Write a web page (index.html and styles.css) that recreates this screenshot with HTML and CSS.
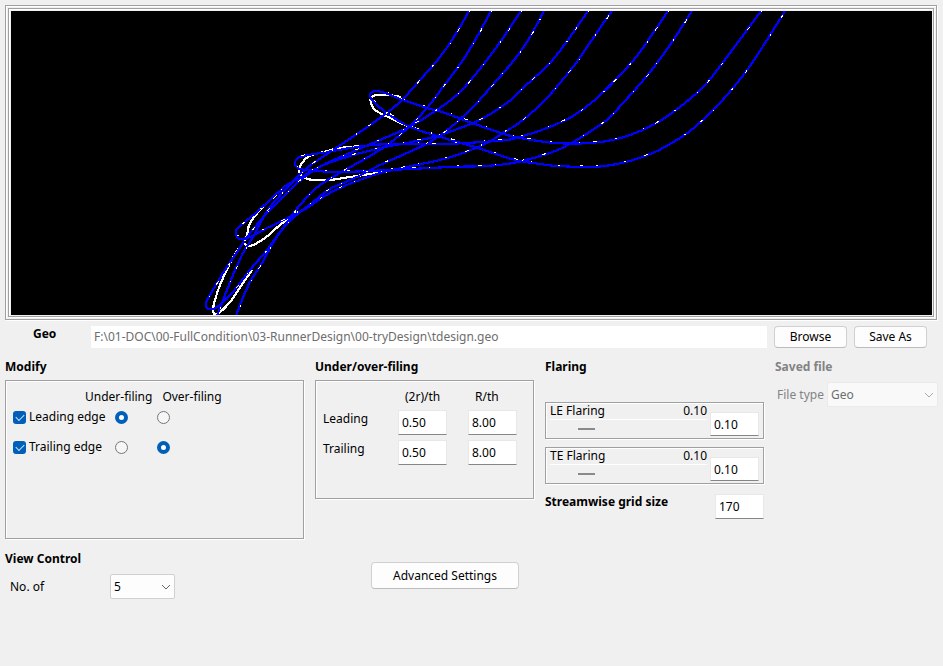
FILE: index.html
```html
<!DOCTYPE html>
<html lang="en">
<head>
<meta charset="utf-8">
<title>Blade filing and flaring</title>
<link rel="stylesheet" href="styles.css">
</head>
<body>
<div class="view-outer">
  <div class="view-inner">
    <svg class="view" id="view" viewBox="11 11 921 304" role="img" aria-label="Blade profiles"></svg>
  </div>
</div>

<div class="file-row">
  <label class="heading geo-label" for="geo">Geo</label>
  <input class="path" id="geo" type="text" disabled value="F:\01-DOC\00-FullCondition\03-RunnerDesign\00-tryDesign\tdesign.geo">
  <button class="button" type="button">Browse</button>
  <button class="button" type="button">Save As</button>
</div>

<main class="columns">
  <section>
    <h2 class="heading">Modify</h2>
    <div class="panel modify">
      <div class="filing-head"><span>Under-filing</span><span>Over-filing</span></div>
      <div class="filing-row">
        <label class="edge"><input class="check" type="checkbox" checked><span>Leading edge</span></label>
        <input class="radio" type="radio" name="leading" aria-label="Leading under-filing" checked>
        <input class="radio" type="radio" name="leading" aria-label="Leading over-filing">
      </div>
      <div class="filing-row">
        <label class="edge"><input class="check" type="checkbox" checked><span>Trailing edge</span></label>
        <input class="radio" type="radio" name="trailing" aria-label="Trailing under-filing">
        <input class="radio" type="radio" name="trailing" aria-label="Trailing over-filing" checked>
      </div>
    </div>
    <h2 class="heading view-heading">View Control</h2>
    <div class="count">
      <label for="count">No. of</label>
      <span class="select-box">
        <select id="count"><option>5</option></select>
        <svg class="chevron" viewBox="0 0 10 6"><path d="M1 1l4 4 4-4"/></svg>
      </span>
    </div>
  </section>

  <section>
    <h2 class="heading">Under/over-filing</h2>
    <div class="panel ratios">
      <span></span><span class="ratio-head">(2r)/th</span><span class="ratio-head">R/th</span>
      <span class="ratio-name">Leading</span>
      <input class="number" type="text" aria-label="Leading (2r)/th" value="0.50">
      <input class="number" type="text" aria-label="Leading R/th" value="8.00">
      <span class="ratio-name">Trailing</span>
      <input class="number" type="text" aria-label="Trailing (2r)/th" value="0.50">
      <input class="number" type="text" aria-label="Trailing R/th" value="8.00">
    </div>
    <button class="button advanced" type="button">Advanced Settings</button>
  </section>

  <section>
    <h2 class="heading flaring-heading">Flaring</h2>
    <div class="panel flare">
      <div class="slider">
        <label for="le">LE Flaring</label><output>0.10</output>
        <input id="le" type="range" min="0" max="0.5" step="0.01" value="0.10">
      </div>
      <input class="number" type="text" aria-label="LE Flaring value" value="0.10">
    </div>
    <div class="panel flare">
      <div class="slider">
        <label for="te">TE Flaring</label><output>0.10</output>
        <input id="te" type="range" min="0" max="0.5" step="0.01" value="0.10">
      </div>
      <input class="number" type="text" aria-label="TE Flaring value" value="0.10">
    </div>
    <div class="grid-size">
      <label class="heading" for="grid">Streamwise grid size</label>
      <input class="number" id="grid" type="text" value="170">
    </div>
  </section>

  <section class="saved">
    <h2 class="heading">Saved file</h2>
    <div class="file-type">
      <label for="type">File type</label>
      <span class="select-box">
        <select id="type" disabled><option>Geo</option></select>
        <svg class="chevron" viewBox="0 0 10 6"><path d="M1 1l4 4 4-4"/></svg>
      </span>
    </div>
  </section>
</main>
<script src="view.js"></script>
</body>
</html>
```
FILE: styles.css
```css
* { box-sizing: border-box; }

body {
  margin: 0;
  padding: 5px;
  background: #f0f0f0;
  color: #000;
  font: 12px/16px "Noto Sans", "Open Sans", sans-serif;
}

input, button, select { font: inherit; color: inherit; margin: 0; }

.view-outer, .view-inner, .panel {
  border: 1px solid #a0a0a0;
  box-shadow: inset 1px 1px #fff, 1px 1px #fff;
}
.view-outer { margin-right: 1px; padding: 2px; }
.view-inner { padding: 2px 1px 1px 2px; }
.view { display: block; width: 100%; background: #000; shape-rendering: crispEdges; }
.view path { fill: none; }
.profile { stroke: #00f; stroke-width: 2.2; }
.edge-arc { stroke: #fff; stroke-width: 2.2; }
.fleck { stroke: #fff; stroke-width: 1; stroke-dasharray: 2 19 4 13 1 27; }

.heading { margin: 0; font-size: 12px; line-height: 16px; font-weight: 700; }

.file-row { display: flex; margin: 6px 11px 0 0; height: 22px; }
.geo-label { width: 86px; padding-left: 28px; }
.path { flex: 1; min-width: 0; border: 0; padding: 0 3px; background: #fff; color: #6d6d6d; }
.button {
  min-width: 73px;
  height: 22px;
  margin-left: 7px;
  padding: 0;
  border: 1px solid #d0d0d0;
  border-bottom-color: #bcbcbc;
  border-radius: 4px;
  background: #fdfdfd;
}

.columns {
  display: grid;
  grid-template-columns: 299fr 219fr 219fr 163fr;
  column-gap: 11px;
  margin-top: 11px;
}
.panel { margin-top: 5px; }

.modify { height: 159px; padding: 8px 7px; }
.filing-head { display: flex; gap: 10px; padding-left: 72px; }
.filing-row { display: flex; align-items: center; height: 30px; }
.filing-head + .filing-row { margin-top: -3px; }
.edge { display: flex; align-items: center; gap: 3px; width: 92px; margin-right: 10px; white-space: nowrap; }
.edge span { flex: 1; }
.check, .radio { appearance: none; flex: none; width: 13px; height: 13px; }
.check { position: relative; border-radius: 3px; background: #005fb8; }
.check::before {
  content: "";
  position: absolute;
  left: 3px;
  top: 3px;
  width: 7px;
  height: 4px;
  border: solid #cfe4f7;
  border-width: 0 0 1px 1px;
  transform: rotate(-45deg);
}
.radio { margin-right: 29px; border: 1px solid #767676; border-radius: 50%; background: #f6f6f6; }
.radio:checked { border: 4px solid #005fb8; background: #fff; }

.view-heading { margin-top: 12px; }
.count { display: flex; align-items: center; margin-top: 7px; padding-left: 5px; }
.count label { width: 100px; }
.select-box { position: relative; display: block; }
.select-box select {
  appearance: none;
  display: block;
  width: 100%;
  height: 25px;
  padding: 0 3px;
  border: 1px solid #d0d0d0;
  border-radius: 2px;
  background: #fdfdfd;
}
.count .select-box { width: 65px; }
.chevron {
  position: absolute;
  right: 4px;
  top: 10px;
  width: 10px;
  height: 6px;
  fill: none;
  stroke: #666;
  pointer-events: none;
}

.number {
  width: 49px;
  height: 25px;
  padding: 0 3px;
  border: 1px solid #e8e8e8;
  border-bottom-color: #868686;
  background: #fff;
}
.ratios {
  display: grid;
  grid-template-columns: 75px 70px 49px;
  grid-template-rows: 16px 25px 25px;
  row-gap: 5px;
  height: 119px;
  padding: 8px 0 0 7px;
}
.ratio-head { padding-left: 7px; }
.ratio-name { padding-top: 1px; }
.advanced { display: block; width: 148px; height: 27px; margin: 63px 0 0 56px; }

.flaring-heading { margin-bottom: 27px; }
.flare { display: flex; height: 37px; margin-top: 8px; padding: 0 4px; }
.slider { display: grid; grid-template-columns: 1fr auto; flex: 1; margin-right: 3px; align-content: start; }
.slider input {
  appearance: none;
  grid-column: 1 / 3;
  width: 100%;
  height: 18px;
  border-top: 1px solid #fff;
  background: none;
}
.slider input::-webkit-slider-thumb { appearance: none; width: 17px; height: 2px; background: #8a8a8a; }
.flare .number { margin-top: 9px; height: 24px; }
.grid-size { display: flex; justify-content: space-between; margin-top: 10px; }

.saved { color: #838383; }
.file-type { display: flex; align-items: center; gap: 2px; margin-top: 7px; padding-left: 2px; }
.file-type label { flex: none; width: 48px; white-space: nowrap; }
.file-type .select-box { flex: 1; }
.file-type select { opacity: 1; border-color: #eaeaea; background: #f9f9f9; color: #6d6d6d; }
.file-type .chevron { stroke: #aaa; }
```
FILE: view.js
```js
// Blade outlines: x,y samples along each curve.
const profiles = [
  "761,11 730,53 705,85 680,107 660,121 640,131 617,139 590,143 555,143 520,138 504,134 472,123 445,113 427,108 403,100 385,93 376,91 371,93 370,97 375,103 388,114 408,126 437,136 475,147 490,152 515,160 540,164 557,166 590,167 605,166 630,161 655,152 680,138 695,127 720,103 750,66 785,11",
  "668,11 640,52 623,72 597,98 573,116 547,128 523,136 507,140 467,143 440,144 390,144 363,146 333,151 303,156 297,159 295,164 298,168 306,170 340,172 390,170 450,167 487,166 513,163 537,157 560,149 580,138 600,125 610,117 633,92 650,72 670,45 692,11",
  "588,11 570,37 550,63 523,88 507,103 480,120 460,128 437,136 407,143 380,148 340,159 317,168 300,178 287,185 272,198 257,212 238,228 236,233 238,238 242,239 250,237 267,228 290,217 307,208 323,197 340,188 357,181 380,173 407,167 440,160 463,153 487,143 503,133 523,120 547,98 573,67 583,53 600,28 612,11",
  "521,11 503,38 483,65 460,92 437,110 407,128 380,140 350,153 323,165 303,178 287,193 270,210 254,228 243,243 233,258 220,278 210,295 206,303 207,308 213,309 220,305 233,292 250,270 267,250 280,232 293,218 313,202 330,189 357,177 380,165 407,153 430,142 450,128 473,107 490,88 510,65 527,42 544,11",
  "469,11 457,32 440,57 420,80 400,102 380,118 360,132 333,150 307,168 287,188 270,207 262,220 253,237 243,253 233,275 227,290 217,316",
  "491,11 478,35 463,60 443,87 427,108 410,126 390,143 370,156 347,169 320,185 300,205 283,228 273,243 262,263 250,282 242,300 236,316"
];
// Edges before they are filed.
const arcs = [
  "401,97 388,95 376,95 371,98 371,103 375,110 388,117 403,124 420,130",
  "363,146 340,148 320,153 309,156 302,163 299,171 303,177 313,180 330,180 350,177 390,171",
  "277,194 262,208 250,223 247,235 244,242 250,246 265,238 280,225 298,212",
  "239,248 230,263 220,285 215,300 213,311 217,314 230,302 243,283 252,270"
];

// Catmull-Rom spline through the samples.
function spline(text) {
  const p = text.split(" ").map(s => s.split(",").map(Number));
  let d = "M" + p[0];
  for (let i = 0; i < p.length - 1; i++) {
    const a = p[i - 1] || p[i], b = p[i], c = p[i + 1], e = p[i + 2] || c;
    const h = [0, 1].map(k => (b[k] + (c[k] - a[k]) / 6).toFixed(1));
    const g = [0, 1].map(k => (c[k] - (e[k] - b[k]) / 6).toFixed(1));
    d += " C" + h + " " + g + " " + c;
  }
  return d;
}

function draw(text, name, shift) {
  const path = document.createElementNS("http://www.w3.org/2000/svg", "path");
  path.setAttribute("d", spline(text));
  path.setAttribute("class", name);
  if (shift) path.setAttribute("transform", "translate(" + shift + ")");
  document.getElementById("view").appendChild(path);
}

arcs.forEach(t => draw(t, "edge-arc"));
profiles.forEach(t => {
  draw(t, "profile");
  draw(t, "fleck", "1 -1");
});
```
